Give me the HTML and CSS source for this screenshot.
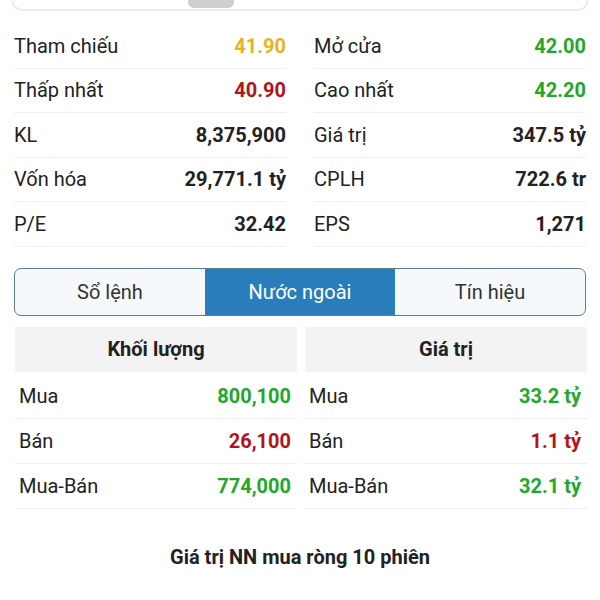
FILE: index.html
```html
<!DOCTYPE html>
<html lang="vi">
<head>
	<meta charset="UTF-8" />
	<title>Cổ phiếu - Nước ngoài</title>
	<link rel="stylesheet" href="styles.css">
</head>
<body>
	<!-- thanh trên (đã cuộn khuất) -->
	<div class="topbar">
		<span class="pill"></span>
	</div>

	<!-- bảng thông tin giá -->
	<div class="info">
		<div class="col">
			<div class="row"><span>Tham chiếu</span><b class="yellow">41.90</b></div>
			<div class="row"><span>Thấp nhất</span><b class="red">40.90</b></div>
			<div class="row"><span>KL</span><b>8,375,900</b></div>
			<div class="row"><span>Vốn hóa</span><b>29,771.1 tỷ</b></div>
			<div class="row"><span>P/E</span><b>32.42</b></div>
		</div>
		<div class="col">
			<div class="row"><span>Mở cửa</span><b class="green">42.00</b></div>
			<div class="row"><span>Cao nhất</span><b class="green">42.20</b></div>
			<div class="row"><span>Giá trị</span><b>347.5 tỷ</b></div>
			<div class="row"><span>CPLH</span><b>722.6 tr</b></div>
			<div class="row"><span>EPS</span><b>1,271</b></div>
		</div>
	</div>

	<!-- tab -->
	<div class="tabs">
		<div class="tab">Sổ lệnh</div>
		<div class="tab active">Nước ngoài</div>
		<div class="tab">Tín hiệu</div>
	</div>

	<!-- khối nước ngoài -->
	<div class="foreign">
		<div class="fcol">
			<div class="fhead">Khối lượng</div>
			<div class="frow"><span>Mua</span><b class="green">800,100</b></div>
			<div class="frow"><span>Bán</span><b class="red">26,100</b></div>
			<div class="frow"><span>Mua-Bán</span><b class="green">774,000</b></div>
		</div>
		<div class="fcol">
			<div class="fhead">Giá trị</div>
			<div class="frow"><span>Mua</span><b class="green">33.2 tỷ</b></div>
			<div class="frow"><span>Bán</span><b class="red">1.1 tỷ</b></div>
			<div class="frow"><span>Mua-Bán</span><b class="green">32.1 tỷ</b></div>
		</div>
	</div>

	<h3 class="title">Giá trị NN mua ròng 10 phiên</h3>
</body>
</html>
```

FILE: styles.css
```css
*{
	margin:0;
	padding:0;
	box-sizing:border-box;
}
body{
	background:#fff;
	color:#222;
	font-family:Roboto,"Noto Sans",sans-serif;
	font-size:20px;
}
b{
	font-weight:700;
}
.yellow{ color:#e3b51e; }
.red{ color:#b3141c; }
.green{ color:#23a72b; }

/* thanh trên */
.topbar{
	position:relative;
	height:10px;
	margin:0 12px;
	background:#fff;
	border:1px solid #e6e6e6;
	border-top:0;
	border-radius:0 0 10px 10px;
	box-shadow:0 1px 2px rgba(0,0,0,0.08);
}
.topbar .pill{
	position:absolute;
	left:175px;
	top:-4px;
	width:46px;
	height:12px;
	background:#cfcfcf;
	border-radius:0 0 6px 6px;
}

/* thông tin giá */
.info{
	display:grid;
	grid-template-columns:1fr 1fr;
	column-gap:28px;
	padding:14px 14px 0;
}
.row{
	display:flex;
	justify-content:space-between;
	align-items:center;
	height:44.5px;
	border-bottom:1px solid #efefef;
}

/* tab */
.tabs{
	display:flex;
	margin:21px 14px 0;
	height:48px;
	border:1.5px solid #5b7d93;
	border-radius:7px;
	overflow:hidden;
	background:#f5f9fc;
}
.tab{
	flex:1;
	display:flex;
	align-items:center;
	justify-content:center;
	color:#333;
}
.tab.active{
	background:#2a7dbb;
	color:#fff;
}

/* nước ngoài */
.foreign{
	display:grid;
	grid-template-columns:1fr 1fr;
	column-gap:8px;
	padding:11px 13px 0 15px;
}
.fhead{
	height:45px;
	display:flex;
	align-items:center;
	justify-content:center;
	background:#f3f3f3;
	font-weight:700;
	margin-bottom:2px;
}
.frow{
	display:flex;
	justify-content:space-between;
	align-items:center;
	height:45px;
	padding:0 6px 0 4px;
	border-bottom:1px solid #efefef;
}

.title{
	text-align:center;
	font-size:20px;
	font-weight:700;
	margin-top:36px;
}
```
